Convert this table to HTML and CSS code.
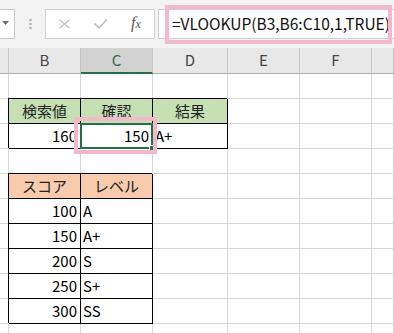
FILE: index.html
```html
<!DOCTYPE html>
<html lang="ja">
<head>
<meta charset="utf-8">
<title>VLOOKUP</title>
<link rel="stylesheet" href="styles.css">
</head>
<body>
<div class="bar">
  <div class="namebox">
    <svg class="caret" width="7" height="4" viewBox="0 0 7 4"><path d="M0 0 H7 L3.5 4 Z" fill="#6b6b6b"/></svg>
  </div>
  <div class="grip">
    <svg width="3" height="11" viewBox="0 0 3 11"><rect x="0.5" y="0" width="2" height="2" fill="#a8a8a8"/><rect x="0.5" y="4" width="2" height="2" fill="#a8a8a8"/><rect x="0.5" y="8" width="2" height="2" fill="#a8a8a8"/></svg>
  </div>
  <div class="fxgroup">
    <svg class="ico-x" width="13" height="10" viewBox="0 0 13 10"><path d="M1.5 0.8 L11.5 9.2 M11.5 0.8 L1.5 9.2" stroke="#c3c3c3" stroke-width="1.5" fill="none"/></svg>
    <svg class="ico-ok" width="15" height="10" viewBox="0 0 15 10"><path d="M1.3 4.5 L6.2 8.8 L13.8 0.6" stroke="#c3c3c3" stroke-width="1.8" fill="none"/></svg>
    <span class="fx">f<span class="fx-x">x</span></span>
  </div>
  <div class="formula">
    <span class="formula-text">=VLOOKUP(B3,B6:C10,1,TRUE)</span>
    <div class="mark mark-formula"></div>
  </div>
</div>

<div class="sheet">
  <!-- column headers -->
  <div class="c h"></div>
  <div class="c h">B</div>
  <div class="c h h-sel">C</div>
  <div class="c h">D</div>
  <div class="c h">E</div>
  <div class="c h">F</div>
  <div class="c h"></div>

  <!-- row 1 -->
  <div class="c rh"></div><div class="c"></div><div class="c"></div><div class="c"></div><div class="c"></div><div class="c"></div><div class="c"></div>

  <!-- row 2: lookup headers -->
  <div class="c rh"></div>
  <div class="c t g ctr">検索値</div>
  <div class="c t g ctr">確認</div>
  <div class="c t g ctr">結果</div>
  <div class="c"></div><div class="c"></div><div class="c"></div>

  <!-- row 3 -->
  <div class="c rh"></div>
  <div class="c t num">160</div>
  <div class="c t num active">150<div class="mark mark-cell"></div><div class="handle"></div></div>
  <div class="c t">A+</div>
  <div class="c"></div><div class="c"></div><div class="c"></div>

  <!-- row 4 -->
  <div class="c rh"></div><div class="c"></div><div class="c"></div><div class="c"></div><div class="c"></div><div class="c"></div><div class="c"></div>

  <!-- row 5: score table headers -->
  <div class="c rh"></div>
  <div class="c t o ctr">スコア</div>
  <div class="c t o ctr">レベル</div>
  <div class="c"></div><div class="c"></div><div class="c"></div><div class="c"></div>

  <!-- rows 6-10 -->
  <div class="c rh"></div><div class="c t num">100</div><div class="c t">A</div><div class="c"></div><div class="c"></div><div class="c"></div><div class="c"></div>
  <div class="c rh"></div><div class="c t num">150</div><div class="c t">A+</div><div class="c"></div><div class="c"></div><div class="c"></div><div class="c"></div>
  <div class="c rh"></div><div class="c t num">200</div><div class="c t">S</div><div class="c"></div><div class="c"></div><div class="c"></div><div class="c"></div>
  <div class="c rh"></div><div class="c t num">250</div><div class="c t">S+</div><div class="c"></div><div class="c"></div><div class="c"></div><div class="c"></div>
  <div class="c rh"></div><div class="c t num">300</div><div class="c t">SS</div><div class="c"></div><div class="c"></div><div class="c"></div><div class="c"></div>

  <!-- row 11 -->
  <div class="c rh"></div><div class="c"></div><div class="c"></div><div class="c"></div><div class="c"></div><div class="c"></div><div class="c"></div>
</div>
</body>
</html>
```

FILE: styles.css
```css
* {
  box-sizing: border-box;
}

html,
body {
  margin: 0;
  padding: 0;
}

body {
  width: 394px;
  height: 333px;
  overflow: hidden;
  background: #ffffff;
  font-family: "Noto Sans CJK JP", "Liberation Sans", sans-serif;
  color: #000;
}

/* ---------- formula bar ---------- */
.bar {
  height: 48px;
  background: #f3f3f3;
  display: flex;
  align-items: flex-start;
  padding-top: 9px;
}

.bar > * {
  flex-shrink: 0;
}

.namebox {
  width: 15px;
  height: 30px;
  background: #fff;
  border: 1px solid #c8c8c8;
  border-left: none;
  display: flex;
  align-items: center;
  padding-left: 2px;
}

.caret {
  display: block;
  margin-top: -2px;
}

.grip {
  margin-left: 14px;
  width: 3px;
  height: 30px;
  display: flex;
  align-items: center;
}

.grip svg {
  display: block;
}

.fxgroup {
  margin-left: 13px;
  width: 110px;
  height: 30px;
  background: #fff;
  border: 1px solid #d0d0d0;
  display: flex;
  align-items: center;
  padding-left: 12px;
}

.ico-x {
  display: block;
  margin-top: -1px;
}

.ico-ok {
  display: block;
  margin-left: 22px;
  margin-top: -1px;
}

.fx {
  margin-left: 23px;
  font-family: "Liberation Serif", serif;
  font-style: italic;
  font-size: 16px;
  color: #555;
  line-height: 1;
  margin-top: -2px;
}

.fx-x {
  font-size: 12px;
}

.bar > .formula {
  position: relative;
  flex: 1 1 auto;
  min-width: 0;
  margin-left: 3px;
  height: 30px;
  background: #fff;
  border: 1px solid #d0d0d0;
  border-right: none;
  display: flex;
  align-items: center;
  padding-left: 13px;
}

.formula-text {
  font-size: 15.5px;
  color: #111;
  white-space: nowrap;
  line-height: 1;
  margin-top: -1px;
}

/* pink call-out frames */
.mark {
  position: absolute;
  border: 4px solid #f4b7cb;
  pointer-events: none;
  z-index: 5;
}

.mark-formula {
  left: 6px;
  top: -5px;
  right: 2px;
  bottom: -6px;
}

.mark-cell {
  left: -7px;
  top: -7px;
  right: -5px;
  bottom: -6px;
}

/* ---------- grid ---------- */
.sheet {
  display: grid;
  grid-template-columns: 9px 72px 72px 75px 72px 72px 22px;
  grid-template-rows: 26px repeat(11, 25px);
}

.c {
  border-right: 1px solid #d6d6d6;
  border-bottom: 1px solid #d6d6d6;
  font-size: 15px;
  line-height: 24px;
  padding: 0 2px;
  white-space: nowrap;
  background: #fff;
}

.h {
  background: #e8e8e8;
  border-right-color: #c4c4c4;
  border-bottom-color: #ababab;
  text-align: center;
  color: #444;
  font-size: 15px;
  line-height: 24px;
}

.h-sel {
  background: #d2d2d2;
  color: #2d6a45;
  border-bottom: 2px solid #217346;
  line-height: 24px;
}

.rh {
  padding: 0;
}

/* bordered table cells */
.t {
  border-right-color: #000;
  border-bottom-color: #000;
  box-shadow: -1px -1px 0 0 #000;
}

.g {
  background: #c6e0b4;
}

.o {
  background: #f8cbad;
}

.ctr {
  text-align: center;
  color: #222;
}

.num {
  text-align: right;
  padding-right: 3px;
}

/* active cell */
.active {
  position: relative;
}

.active::after {
  content: "";
  position: absolute;
  left: -1px;
  top: -1px;
  right: -1px;
  bottom: -1px;
  border: 2px solid #217346;
  z-index: 3;
}

.handle {
  position: absolute;
  right: -3px;
  bottom: -3px;
  width: 6px;
  height: 6px;
  background: #217346;
  border: 1px solid #fff;
  z-index: 4;
}
```
